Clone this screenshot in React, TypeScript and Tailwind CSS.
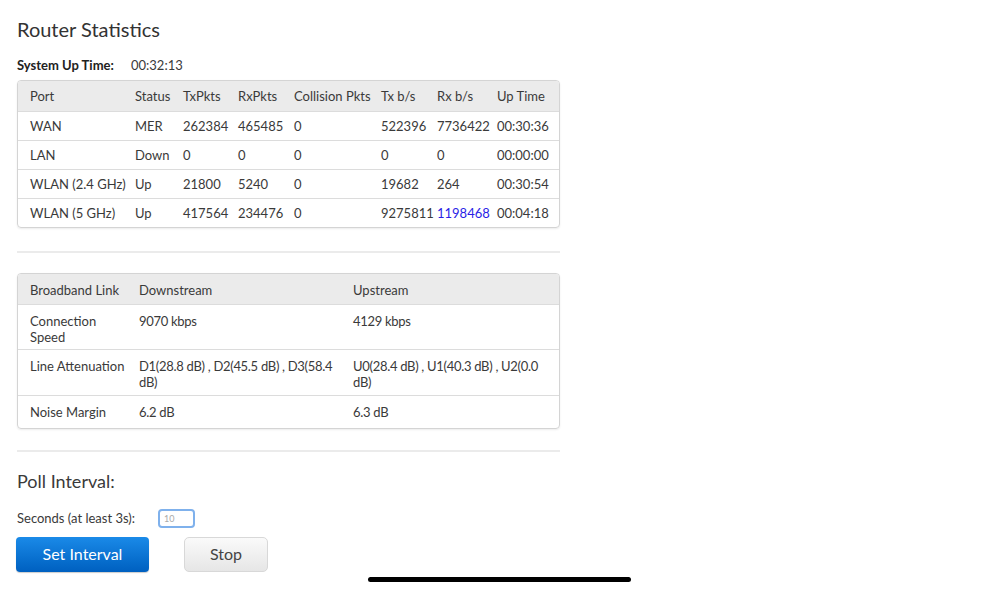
const rows = [
  ["WAN", "MER", "262384", "465485", "0", "522396", "7736422", "00:30:36"],
  ["LAN", "Down", "0", "0", "0", "0", "0", "00:00:00"],
  ["WLAN (2.4 GHz)", "Up", "21800", "5240", "0", "19682", "264", "00:30:54"],
  ["WLAN (5 GHz)", "Up", "417564", "234476", "0", "9275811", "1198468", "00:04:18"],
]

const headers = ["Port", "Status", "TxPkts", "RxPkts", "Collision Pkts", "Tx b/s", "Rx b/s", "Up Time"]
const widths = ["w-[113px]", "w-[48px]", "w-[55px]", "w-[56px]", "w-[87px]", "w-[56px]", "w-[60px]", "w-[68px]"]

const link = [
  { name: ["Connection", "Speed"], down: ["9070 kbps"], up: ["4129 kbps"], h: "h-[45px]" },
  {
    name: ["Line Attenuation"],
    down: ["D1(28.8 dB) , D2(45.5 dB) , D3(58.4", "dB)"],
    up: ["U0(28.4 dB) , U1(40.3 dB) , U2(0.0", "dB)"],
    h: "h-[46px]",
  },
  { name: ["Noise Margin"], down: ["6.2 dB"], up: ["6.3 dB"], h: "h-[33px]" },
]

function Lines({ lines, tight }: { lines: string[]; tight?: boolean }) {
  return (
    <>
      {lines.map((l) => (
        <div key={l} className={`whitespace-nowrap ${tight ? "tracking-[-0.3px]" : ""}`}>
          {l}
        </div>
      ))}
    </>
  )
}

export default function App() {
  return (
    <div className="w-[999px] h-[589px] bg-white relative overflow-hidden text-[#3a3a3a] font-['Lato',sans-serif]">
      <div className="pl-[17px] w-[560px]">
        <h1 className="pt-[16px] text-[20px] leading-[26px] text-[#333]">Router Statistics</h1>
        <div className="mt-[15px] flex text-[13px] leading-[16px]">
          <span className="w-[114px] font-bold text-[#222]">System Up Time:</span>
          <span>00:32:13</span>
        </div>

        <div className="mt-[7px] border border-[#d4d4d4] rounded-[4px] overflow-hidden shadow-[0_1px_2px_rgba(0,0,0,0.08)]">
          <table className="w-full text-[13px] border-collapse table-fixed">
            <thead>
              <tr className="bg-[#ebebeb] h-[30px]">
                {headers.map((h, i) => (
                  <th key={h} className={`${widths[i]} pt-[2px] text-left font-normal ${i === 0 ? "pl-[12px]" : "pl-[4px]"}`}>
                    {h}
                  </th>
                ))}
              </tr>
            </thead>
            <tbody>
              {rows.map((r, ri) => (
                <tr key={ri} className="h-[29px] border-t border-[#dcdcdc]">
                  {r.map((c, i) => (
                    <td
                      key={i}
                      className={`${i === 0 ? "pl-[12px]" : "pl-[4px]"} pt-[2px] ${ri === 3 && i === 6 ? "text-[#2a1ee6]" : ""} whitespace-nowrap`}
                    >
                      {c}
                    </td>
                  ))}
                </tr>
              ))}
            </tbody>
          </table>
        </div>

        <div className="mt-[23px] h-[2px] bg-[#ebebeb]" />

        <div className="mt-[20px] border border-[#d4d4d4] rounded-[4px] overflow-hidden shadow-[0_1px_2px_rgba(0,0,0,0.08)]">
          <table className="w-full text-[13px] leading-[16px] border-collapse table-fixed">
            <thead>
              <tr className="bg-[#ebebeb] h-[30px]">
                <th className="w-[117px] pl-[12px] pt-[2px] text-left font-normal">Broadband Link</th>
                <th className="w-[214px] pl-[4px] pt-[2px] text-left font-normal">Downstream</th>
                <th className="pl-[4px] pt-[2px] text-left font-normal">Upstream</th>
              </tr>
            </thead>
            <tbody>
              {link.map((r) => (
                <tr key={r.name[0]} className={`${r.h} border-t border-[#dcdcdc] align-top`}>
                  <td className="pl-[12px] pt-[8px]">
                    <Lines lines={r.name} />
                  </td>
                  <td className="pl-[4px] pt-[8px]">
                    <Lines lines={r.down} tight />
                  </td>
                  <td className="pl-[4px] pt-[8px]">
                    <Lines lines={r.up} tight />
                  </td>
                </tr>
              ))}
            </tbody>
          </table>
        </div>

        <div className="mt-[21px] h-[2px] bg-[#ebebeb]" />

        <h2 className="mt-[17px] text-[18px] leading-[24px]">Poll Interval:</h2>
        <div className="mt-[16px] flex items-center text-[13px]">
          <span className="w-[141px]">Seconds (at least 3s):</span>
          <input
            defaultValue="10"
            className="w-[37px] h-[19px] rounded-[4px] border-2 border-[#7fb1ec] px-[4px] text-[9px] text-[#aaa] outline-none"
          />
        </div>
        <div className="mt-[8px] flex gap-[35px] -ml-[1px]">
          <button className="w-[133px] h-[35px] rounded-[4px] bg-gradient-to-b from-[#1a8ae8] to-[#0060c0] text-white text-[16px] shadow-[0_1px_1px_rgba(0,0,0,0.2)]">
            Set Interval
          </button>
          <button className="w-[84px] h-[35px] rounded-[5px] border border-[#d8d8d8] bg-gradient-to-b from-[#fafafa] to-[#e6e6e6] text-[#444] text-[16px]">
            Stop
          </button>
        </div>
      </div>
      <div className="absolute left-[368px] top-[577px] w-[263px] h-[5px] rounded-full bg-black" />
    </div>
  )
}
